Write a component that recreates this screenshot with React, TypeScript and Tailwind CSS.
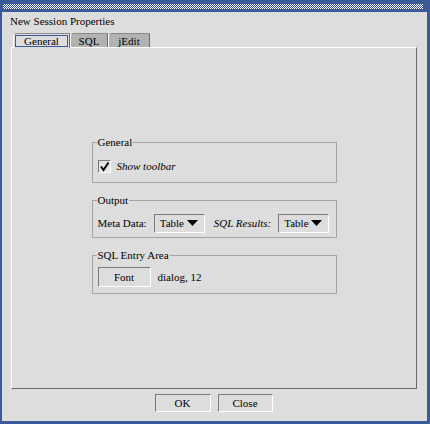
import React from 'react';

const serif = { fontFamily: '"Liberation Serif", "Times New Roman", serif' };

function Combo() {
	return (
		<div className="flex h-[19px] w-[51px] items-center justify-between border border-t-[#7a7a7a] border-l-[#7a7a7a] border-r-white border-b-white pl-[5px] pr-[6px]">
			<span>Table</span>
			<svg width="11" height="6" viewBox="0 0 11 6">
				<polygon points="0,0 11,0 5.5,6" fill="#000" />
			</svg>
		</div>
	);
}

function Group({ title, pad, children }: { title: string; pad: string; children: React.ReactNode }) {
	return (
		<fieldset className={`w-[245px] border border-[#a4a4a4] pl-[4px] pr-[6px] ${pad}`}>
			<legend className="px-[1px] leading-[12px]">{title}</legend>
			<div className="flex h-[20px] items-center pl-[1px]">{children}</div>
		</fieldset>
	);
}

export default function App() {
	return (
		<div className="flex h-[424px] w-[430px] flex-col bg-[#3a5a9a] text-[11px] text-black" style={serif}>
			{/* title bar */}
			<div className="h-[12px] flex-none pt-[4px] pl-[3px] pr-[7px]">
				<div className="h-[5px] bg-[repeating-conic-gradient(#ffffff_0_25%,#3a5a9a_0_50%)] bg-[length:2px_2px]" />
			</div>

			<div className="flex flex-1 flex-col pl-[2px] pr-[3px] pb-[3px]">
				<div className="flex flex-1 flex-col bg-[#dddddd]">
					<div className="mt-[3px] h-[13px] pl-[8px] leading-[13px]">New Session Properties</div>

					{/* tabs */}
					<div className="mt-[5px] flex h-[14px] items-end pl-[11px]">
						<div className="relative z-10 -mb-[1px] flex h-[15px] w-[57px] items-start rounded-tl-[4px] border-t border-l border-t-[#8a8a8a] border-l-white border-r border-r-[#6a6a6a] bg-[#dddddd] px-[1px] pt-[1px]">
							<div className="flex h-[12px] w-full items-center justify-center border border-[#3a5a9a] leading-[12px]">General</div>
						</div>
						<div className="flex h-[14px] w-[38px] items-center justify-center rounded-tl-[4px] border-t border-l border-t-[#8a8a8a] border-l-white border-r border-r-[#6a6a6a] bg-[#b2b2b2] leading-[12px]">SQL</div>
						<div className="flex h-[14px] w-[42px] items-center justify-center rounded-tl-[4px] border-t border-l border-t-[#8a8a8a] border-l-white border-r border-r-[#6a6a6a] bg-[#b2b2b2] leading-[12px]">jEdit</div>
					</div>

					{/* tab panel */}
					<div className="ml-[9px] mr-[10px] flex flex-1 flex-col items-center justify-center gap-[11px] border border-t-white border-l-white border-r-[#6a6a6a] border-b-[#6a6a6a] pb-[6px]">
						<Group title="General" pad="pt-[8px] pb-[6px]">
							<div className="flex h-[13px] w-[13px] items-center justify-center border border-t-[#7a7a7a] border-l-[#7a7a7a] border-r-white border-b-white bg-[#e4e4e4]">
								<svg width="11" height="11" viewBox="0 0 11 11">
									<path d="M2 5.5 L4.5 9 L9.5 1.5" stroke="#000" strokeWidth="2" fill="none" />
								</svg>
							</div>
							<span className="ml-[6px] italic">Show toolbar</span>
						</Group>
						<Group title="Output" pad="pt-[7px] pb-[4px]">
							<span>Meta Data:</span>
							<div className="ml-[7px]">
								<Combo />
							</div>
							<span className="ml-[9px] italic">SQL Results:</span>
							<div className="ml-[7px]">
								<Combo />
							</div>
						</Group>
						<Group title="SQL Entry Area" pad="pt-[6px] pb-[6px]">
							<div className="flex h-[20px] w-[53px] items-center justify-center border border-t-[#7a7a7a] border-l-[#7a7a7a] border-r-white border-b-white">Font</div>
							<span className="ml-[7px]">dialog, 12</span>
						</Group>
					</div>

					{/* buttons */}
					<div className="mt-[5px] mb-[9px] flex justify-center gap-[7px] pr-[2px]">
						<div className="flex h-[18px] w-[56px] items-center justify-center border border-t-[#7a7a7a] border-l-[#7a7a7a] border-r-white border-b-white">OK</div>
						<div className="flex h-[18px] w-[55px] items-center justify-center border border-t-[#7a7a7a] border-l-[#7a7a7a] border-r-white border-b-white">Close</div>
					</div>
				</div>
			</div>
		</div>
	);
}
